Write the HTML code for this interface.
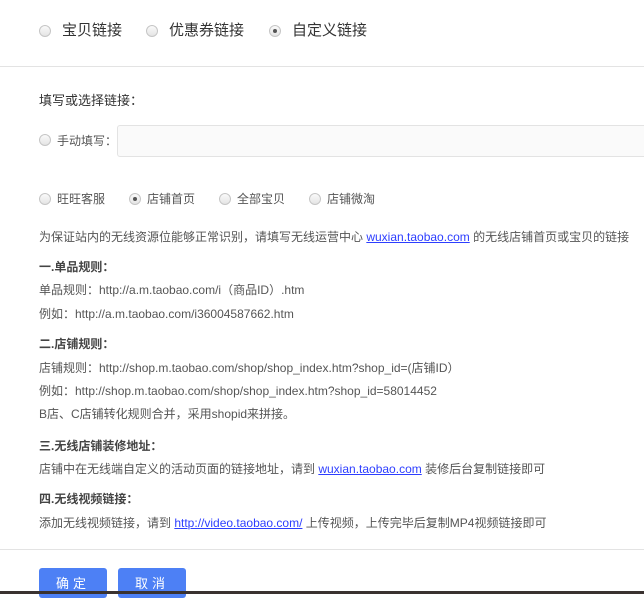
<!DOCTYPE html>
<html><head><meta charset="utf-8"><style>
body{margin:0;width:644px;height:594px;overflow:hidden;background:#fff;font-family:"Liberation Sans","Noto Sans CJK SC",sans-serif;color:#555;position:relative}
.a{position:absolute;white-space:nowrap;font-size:12px;line-height:16px}
.r{position:absolute;width:10px;height:10px;border:1px solid #c6c6c6;border-radius:50%;background:linear-gradient(#fafafa,#e4e4e4)}
.r.on:after{content:"";position:absolute;left:3px;top:3px;width:4px;height:4px;border-radius:50%;background:#555}
a{color:#2d3eff;text-decoration:underline}
b{color:#444}
.btn{position:absolute;top:568px;width:68px;height:30px;background:#4d80f5;border-radius:3px;color:#fff;font-size:13px;text-align:center;line-height:32px;letter-spacing:4px}
.t{font-size:15px;line-height:20px;color:#333;top:21px}
</style></head><body>
<span class="r" style="left:39px;top:25px"></span><div class="a t" style="left:62px">宝贝链接</div>
<span class="r" style="left:146px;top:25px"></span><div class="a t" style="left:169px">优惠券链接</div>
<span class="r on" style="left:269px;top:25px"></span><div class="a t" style="left:292px">自定义链接</div>
<div style="position:absolute;left:0;top:66px;width:644px;height:1px;background:#e3e3e3"></div>
<div class="a" style="left:39px;top:93px;font-size:13px;color:#333">填写或选择链接：</div>
<span class="r" style="left:39px;top:134px"></span><div class="a" style="left:57px;top:133px">手动填写：</div>
<div style="position:absolute;left:117px;top:125px;width:540px;height:30px;border:1px solid #e3e3e3;border-radius:3px;background:#fafafa"></div>
<span class="r" style="left:39px;top:193px"></span><div class="a" style="left:57px;top:191px">旺旺客服</div>
<span class="r on" style="left:129px;top:193px"></span><div class="a" style="left:147px;top:191px">店铺首页</div>
<span class="r" style="left:219px;top:193px"></span><div class="a" style="left:237px;top:191px">全部宝贝</div>
<span class="r" style="left:309px;top:193px"></span><div class="a" style="left:327px;top:191px">店铺微淘</div>
<div class="a" style="left:39px;top:229px">为保证站内的无线资源位能够正常识别，请填写无线运营中心 <a>wuxian.taobao.com</a> 的无线店铺首页或宝贝的链接</div>
<div class="a" style="left:39px;top:259px"><b>一.单品规则：</b></div>
<div class="a" style="left:39px;top:282px">单品规则：http://a.m.taobao.com/i（商品ID）.htm</div>
<div class="a" style="left:39px;top:306px">例如：http://a.m.taobao.com/i36004587662.htm</div>
<div class="a" style="left:39px;top:336px"><b>二.店铺规则：</b></div>
<div class="a" style="left:39px;top:360px">店铺规则：http://shop.m.taobao.com/shop/shop_index.htm?shop_id=(店铺ID）</div>
<div class="a" style="left:39px;top:383px">例如：http://shop.m.taobao.com/shop/shop_index.htm?shop_id=58014452</div>
<div class="a" style="left:39px;top:406px">B店、C店铺转化规则合并，采用shopid来拼接。</div>
<div class="a" style="left:39px;top:438px"><b>三.无线店铺装修地址：</b></div>
<div class="a" style="left:39px;top:461px">店铺中在无线端自定义的活动页面的链接地址，请到 <a>wuxian.taobao.com</a> 装修后台复制链接即可</div>
<div class="a" style="left:39px;top:491px"><b>四.无线视频链接：</b></div>
<div class="a" style="left:39px;top:515px">添加无线视频链接，请到 <a>http://video.taobao.com/</a> 上传视频，上传完毕后复制MP4视频链接即可</div>
<div style="position:absolute;left:0;top:549px;width:644px;height:1px;background:#e3e3e3"></div>
<div class="btn" style="left:39px">确定</div>
<div class="btn" style="left:118px">取消</div>
<div style="position:absolute;left:0;top:591px;width:644px;height:3px;background:#3a3230"></div>
</body></html>
